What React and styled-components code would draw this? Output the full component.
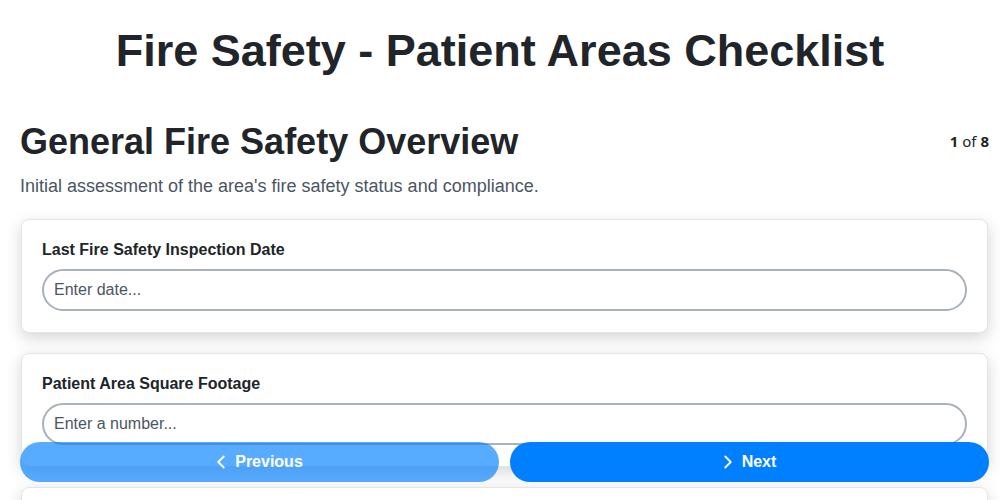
import React from "react";
import styled, { createGlobalStyle } from "styled-components";
import { ChevronLeft, ChevronRight } from "lucide-react";

const GlobalStyle = createGlobalStyle`
  html, body {
    margin: 0;
    background: #ffffff;
    font-family: "Liberation Sans", Arial, sans-serif;
    color: #212529;
  }
  * { box-sizing: border-box; }
`

const Screen = styled.div`
  position: relative;
  height: 100vh;
  overflow: hidden;
`
const Title = styled.h1`
  font-size: 45px;
  font-weight: 700;
  text-align: center;
  margin: 0;
  padding: 25px 0 0;
  line-height: 1.15;
`
const Page = styled.div`
  padding: 44px 11px 0 20px;
`
const SectionHead = styled.div`
  display: flex;
  justify-content: space-between;
  align-items: flex-start;
`
const SectionTitle = styled.h2`
  font-size: 36px;
  font-weight: 700;
  margin: 0;
  line-height: 1.15;
`
const Counter = styled.div`
  font-family: "Noto Sans", sans-serif;
  font-size: 15px;
  margin-top: 10px;
  b { font-weight: 700; }
`
const Description = styled.p`
  font-size: 18px;
  color: #4b5563;
  margin: 14px 0 22px;
`
const Fields = styled.div`
  display: flex;
  flex-direction: column;
  gap: 20px;
  margin: 0 1px 0 1px;
`
const Card = styled.div`
  background: #fff;
  border: 1px solid #e4e4ea;
  border-radius: 8px;
  padding: 21px 20px 21px;
  box-shadow: 0 5px 16px rgba(0, 0, 0, 0.17);
`
const Label = styled.label`
  display: block;
  font-size: 16px;
  font-weight: 700;
  margin-bottom: 10px;
`
const Input = styled.input`
  width: 100%;
  font-family: "Liberation Sans", Arial, sans-serif;
  font-size: 16px;
  padding: 10px 10px;
  border: 2px solid #a9b1bb;
  border-radius: 999px;
  outline: none;
  color: #212529;
  &::placeholder { color: #4b5563; }
`
const Footer = styled.div`
  position: absolute;
  left: 20px;
  right: 11px;
  bottom: 18px;
  display: flex;
  gap: 11px;
`
const NavButton = styled.button`
  flex: 1;
  height: 40px;
  display: flex;
  align-items: center;
  justify-content: center;
  gap: 3px;
  padding: 0 6px 0 0;
  border: none;
  border-radius: 20px;
  background: #0080ff;
  color: #fff;
  font-family: "Liberation Sans", Arial, sans-serif;
  font-size: 16px;
  font-weight: 700;
  opacity: ${props => (props.disabled ? 0.65 : 1)};
`

const fields = [
  { label: "Last Fire Safety Inspection Date", placeholder: "Enter date..." },
  { label: "Patient Area Square Footage", placeholder: "Enter a number..." },
  { label: "Number of Fire Extinguishers", placeholder: "Enter a number..." },
  { label: "Inspector Name", placeholder: "Enter text..." },
]

export default function App() {
  return (
    <>
      <GlobalStyle />
      <Screen>
        <Title>Fire Safety - Patient Areas Checklist</Title>
        <Page>
          <SectionHead>
            <SectionTitle>General Fire Safety Overview</SectionTitle>
            <Counter><b>1</b> of <b>8</b></Counter>
          </SectionHead>
          <Description>Initial assessment of the area's fire safety status and compliance.</Description>
          <Fields>
            {fields.map(f => (
              <Card key={f.label}>
                <Label>{f.label}</Label>
                <Input placeholder={f.placeholder} />
              </Card>
            ))}
          </Fields>
        </Page>
        <Footer>
          <NavButton disabled>
            <ChevronLeft size={22} strokeWidth={2} />
            Previous
          </NavButton>
          <NavButton>
            <ChevronRight size={22} strokeWidth={2} />
            Next
          </NavButton>
        </Footer>
      </Screen>
    </>
  );
}
